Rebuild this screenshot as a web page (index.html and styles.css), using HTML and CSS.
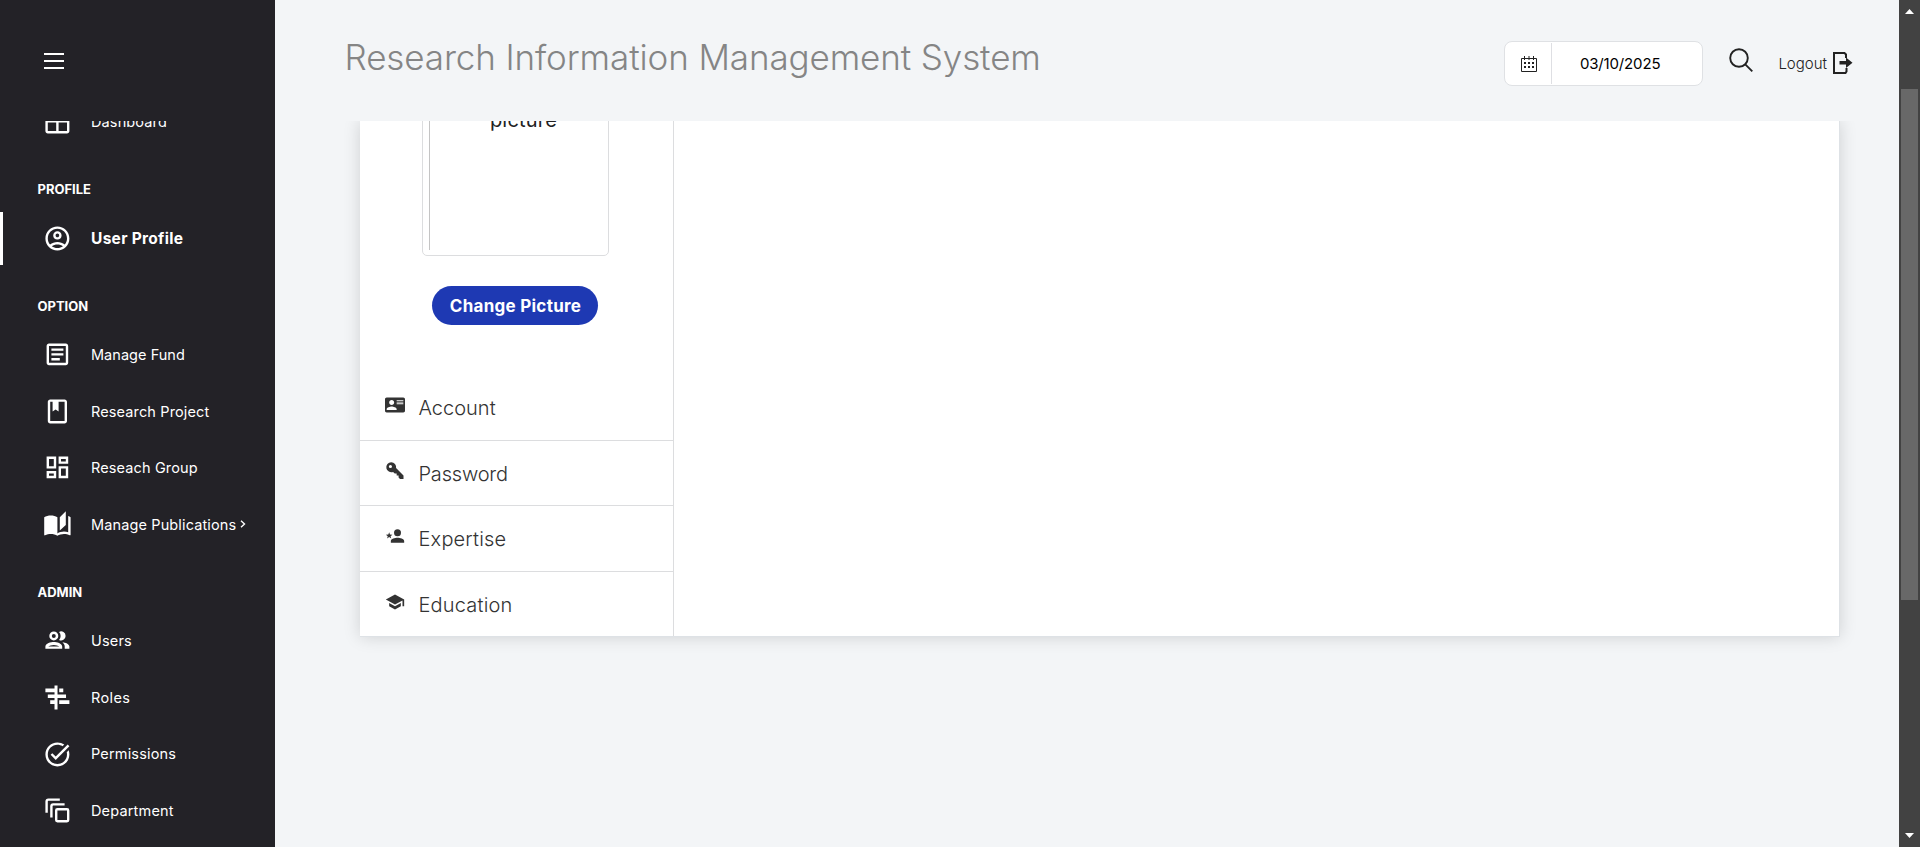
FILE: index.html
```html
<!DOCTYPE html>
<html lang="en">
<head>
<meta charset="utf-8">
<title>Research Information Management System</title>
<link rel="stylesheet" href="styles.css">
</head>
<body>
<div class="app">
  <aside class="sidebar">
    <div class="sidebar-top">
      <svg class="burger" viewBox="0 0 20 17"><path d="M0 2h20M0 9h20M0 16h20"/></svg>
    </div>
    <div class="menu-window">
      <nav class="menu">
        <a class="item"><svg viewBox="0 0 24 24"><path d="M20 2H4c-1.1 0-2 .9-2 2v16c0 1.1.9 2 2 2h16c1.1 0 2-.9 2-2V4c0-1.1-.9-2-2-2zM4 4h7v7H4zm0 16v-7h7v7zm16 0h-7v-7h7zm0-9h-7V4h7z"/></svg><span class="ls-b">Dashboard</span></a>
        <h3 class="group">PROFILE</h3>
        <a class="item active"><svg viewBox="0 0 24 24"><path d="M12 2C6.48 2 2 6.48 2 12s4.48 10 10 10 10-4.48 10-10S17.52 2 12 2zM7.35 18.5C8.66 17.56 10.26 17 12 17s3.34.56 4.65 1.5C15.34 19.44 13.74 20 12 20s-3.34-.56-4.65-1.5zm10.79-1.38C16.45 15.8 14.32 15 12 15s-4.45.8-6.14 2.12C4.7 15.73 4 13.95 4 12c0-4.42 3.58-8 8-8s8 3.58 8 8c0 1.95-.7 3.73-1.86 5.12zM12 6c-1.93 0-3.5 1.57-3.5 3.5S10.07 13 12 13s3.5-1.57 3.5-3.5S13.93 6 12 6zm0 5c-.83 0-1.5-.67-1.5-1.5S11.17 8 12 8s1.500.67 1.500 1.500S12.830 11 12 11z"/></svg><span>User Profile</span></a>
        <h3 class="group">OPTION</h3>
        <a class="item"><svg viewBox="0 0 24 24"><path d="M19 5v14H5V5h14m0-2H5c-1.100 0-2 .9-2 2v14c0 1.100.9 2 2 2h14c1.100 0 2-.9 2-2V5c0-1.100-.9-2-2-2zM14 17H7v-2h7v2zm3-4H7v-2h10v2zm0-4H7V7h10v2z"/></svg><span class="ls-a">Manage Fund</span></a>
        <a class="item"><svg viewBox="0 0 24 24"><path d="M18 2H6c-1.100 0-2 .9-2 2v16c0 1.100.9 2 2 2h12c1.100 0 2-.9 2-2V4c0-1.100-.9-2-2-2zM6 4h2v8l2.500-1.500L13 12V4h5v16H6V4z"/></svg><span class="ls-b">Research Project</span></a>
        <a class="item"><svg viewBox="0 0 24 24"><path d="M19 5v2h-4V5h4M9 5v6H5V5h4m10 8v6h-4v-6h4M9 17v2H5v-2h4M21 3h-8v6h8V3zM11 3H3v10h8V3zm10 8h-8v10h8V11zm-10 4H3v6h8v-6z"/></svg><span class="ls-b">Reseach Group</span></a>
        <a class="item"><svg viewBox="0 0 24 24"><path d="M19 1l-5 5v11l5-4.500V1zM1 6v14.650c0 .25.25.5.5.5.1 0 .15-.05.25-.05C3.100 20.450 5.050 20 6.500 20c1.950 0 4.050.4 5.500 1.500V6c-1.450-1.100-3.550-1.500-5.500-1.500S2.450 4.900 1 6zm22 13.500V6c-.6-.45-1.250-.75-2-1v13.500c-1.100-.35-2.300-.5-3.500-.5-1.700 0-4.150.65-5.500 1.500v2c1.350-.85 3.800-1.500 5.500-1.500 1.650 0 3.350.3 4.750 1.050.1.05.15.05.25.05.25 0 .5-.25.5-.5v-1.100z"/></svg><span class="ls-b">Manage Publications</span><svg class="chevron" viewBox="0 0 6 8"><path d="M1 .8 4.500 4 1 7.200"/></svg></a>
        <h3 class="group">ADMIN</h3>
        <a class="item"><svg viewBox="0 0 24 24"><path fill-rule="evenodd" d="M9 4.500a3.750 3.750 0 1 0 0 7.500 3.750 3.750 0 0 0 0-7.500zm0 2.100a1.650 1.650 0 1 1 0 3.300 1.650 1.650 0 0 1 0-3.300zM9 13.400c-2.400 0-7 1.200-7 3.700v1.900h14v-1.900c0-2.500-4.600-3.700-7-3.700zM4.400 17.100c.8-.7 2.900-1.300 4.600-1.300s3.800.6 4.600 1.300z"/><path d="M13.400 4.900a5 5 0 0 1 0 6.700 3.750 3.750 0 1 0 0-6.700zM16.200 13.500c1.100.9 1.900 2.100 1.900 3.600V19H22v-1.900c0-2.100-3.300-3.300-5.800-3.600z"/></svg><span class="ls-c">Users</span></a>
        <a class="item"><svg viewBox="0 0 24 24"><path d="M9.600 2h2.500v20H9.600zM2 4.600h7.600v3.100H2zM4 9.500h5.600v3.100H4zM6 14.400h3.600v3.100H6zM13.500 4.600h3.400v3.100h-3.400zM12 9.500h7.200v3.100H12zM13.500 14.400H22v3.100h-8.500z"/></svg><span class="ls-d">Roles</span></a>
        <a class="item"><svg viewBox="0 0 24 24"><path d="M22 5.180 10.590 16.600l-4.240-4.240 1.410-1.410 2.830 2.830 10-10L22 5.180zM19.790 10.220c.13.57.21 1.170.21 1.780 0 4.420-3.580 8-8 8s-8-3.580-8-8 3.580-8 8-8c1.580 0 3.040.46 4.280 1.250l1.440-1.440A9.900 9.900 0 0 0 12 2C6.480 2 2 6.480 2 12s4.480 10 10 10 10-4.480 10-10c0-1.190-.22-2.330-.6-3.390l-1.610 1.610z"/></svg><span class="ls-c">Permissions</span></a>
        <a class="item"><svg viewBox="0 0 24 24"><path fill="none" stroke="#fff" stroke-width="2" d="M3 14V4.500Q3 3 4.500 3H14M7 18V8.500Q7 7 8.500 7H18"/><path fill="none" stroke="#fff" stroke-width="2" d="M12 11h8q1 0 1 1v8q0 1-1 1h-8q-1 0-1-1v-8q0-1 1-1z"/></svg><span class="ls-c">Department</span></a>
      </nav>
    </div>
  </aside>
  <div class="main">
    <header class="header">
      <h1>Research Information Management System</h1>
      <div class="tools">
        <div class="date">
          <span class="date-icon"><svg viewBox="0 0 16 16"><path fill="none" stroke="#222" d="M.5 2.500h15v13H.5zM3.500 0v4M8 0v4M12.500 0v4"/><path d="M3 6h2v2H3zM7 6h2v2H7zM11 6h2v2h-2zM3 10h2v2H3zM7 10h2v2H7zM11 10h2v2h-2z"/></svg></span>
          <span class="date-text">03/10/2025</span>
        </div>
        <svg class="search" viewBox="0 0 24 24"><circle cx="10" cy="10" r="8.800"/><path d="m16.300 16.300 7 7"/></svg>
        <a class="logout"><span>Logout</span><svg viewBox="0 0 20 22"><path fill="none" stroke="#222" stroke-width="2" d="M13 6V2.500L11.500 1H1v20h11.500l1-1.500V16"/><path d="M6.500 9H13V5.500l6.500 5.200L13 16v-3.500H6.500z"/></svg></a>
      </div>
    </header>
    <main class="content">
      <section class="card">
        <div class="card-side">
          <div class="frame"><div class="photo">profile picture</div></div>
          <button class="change">Change Picture</button>
          <ul class="tabs">
            <li><svg viewBox="0 0 24 24"><path fill-rule="evenodd" d="M22 3H2C.9 3 0 3.900 0 5v14c0 1.100.9 2 2 2h20c1.100 0 2-.9 2-2V5c0-1.100-.9-2-2-2zM8 6c1.660 0 3 1.340 3 3s-1.340 3-3 3-3-1.340-3-3 1.340-3 3-3zm6 12H2v-1c0-2 4-3.100 6-3.100s6 1.100 6 3.100v1zm8-10v1h-8V8zm0-2v1h-8V6zm0 4v1h-8v-1z"/></svg><span class="ls-e">Account</span></li>
            <li><svg viewBox="0 0 24 24"><path fill-rule="evenodd" d="M7.500 1.500a6 6 0 1 0 2.200 11.600l2 2h2.300v2.300h2.300v2.300l1.700 1.800h4.200v-4.200l-8.900-8.800A6 6 0 0 0 7.500 1.500zM6.500 4.700a1.900 1.900 0 1 1 0 3.800 1.900 1.900 0 0 1 0-3.800z"/></svg><span class="ls-f">Password</span></li>
            <li><svg viewBox="0 0 24 24"><circle cx="15" cy="8" r="4.200"/><path d="M15 14c-2.900 0-8 1.300-8 4v2h16v-2c0-2.700-5.100-4-8-4zM5 13.300 7.500 15l-.8-2.800 2.200-1.800-2.900-.1L5 7.500l-1 2.800-2.900.1 2.200 1.800-.8 2.800z"/></svg><span class="ls-g">Expertise</span></li>
            <li><svg viewBox="0 0 24 24"><path d="M5 13.180v4L12 21l7-3.820v-4L12 17l-7-3.820zM12 3 1 9l11 6 9-4.910V17h2V9L12 3z"/></svg><span class="ls-g">Education</span></li>
          </ul>
        </div>
      </section>
    </main>
  </div>
  <div class="scrollbar">
    <svg viewBox="0 0 9 5"><path d="M0 5 4.500 0 9 5z"/></svg>
    <div class="thumb"></div>
    <svg viewBox="0 0 9 5"><path d="M0 0h9L4.500 5z"/></svg>
  </div>
</div>
</body>
</html>
```
FILE: styles.css
```css
* { box-sizing: border-box; }
body { margin: 0; font-family: Inter, "Open Sans", sans-serif; background: #f3f5f7; color: #222; }
h1, h3, ul { margin: 0; padding: 0; }
.app { display: flex; height: 847px; overflow: hidden; }

.sidebar { width: 275px; flex: none; background: #232227; color: #fff; display: flex; flex-direction: column; }
.sidebar-top { height: 121px; flex: none; padding: 52px 0 0 44px; }
.burger { display: block; width: 20px; height: 17px; stroke: #fff; stroke-width: 2; }
.menu-window { flex: 1; overflow: hidden; }
.menu { margin-top: -25.7px; }
.item { display: flex; align-items: center; height: 53px; margin-bottom: 3.6px; padding-left: 43.4px; font-size: 14.5px; white-space: nowrap; }
.item svg { width: 28.8px; height: 28.8px; margin-right: 18.8px; fill: #fff; flex: none; }
.item .chevron { width: 6px; height: 8px; margin: -1px 0 0 4px; fill: none; stroke: #fff; stroke-width: 1.4; }
.item.active { border-left: 3px solid #fff; padding-left: 40.4px; font-size: 15.5px; font-weight: 700; letter-spacing: .3px; }
.group { height: 59.8px; padding: 27.5px 0 0 37.5px; font-size: 13px; line-height: 20px; font-weight: 700; }

.ls-a { letter-spacing: .04px; }
.ls-b { letter-spacing: .13px; }
.ls-c { letter-spacing: .17px; }
.ls-d { letter-spacing: .4px; }
.ls-f { letter-spacing: -.2px; }
.ls-g { letter-spacing: .18px; }

.main { flex: 1; min-width: 0; display: flex; flex-direction: column; }
.header { height: 121px; flex: none; display: flex; justify-content: space-between; padding: 0 46px 0 69.5px; }
.header h1 { padding-top: 35px; font-size: 35px; line-height: 44px; font-weight: 300; letter-spacing: -.11px; color: #858585; white-space: nowrap; }
.tools { display: flex; align-items: flex-start; padding-top: 41px; }
.date { width: 199px; height: 45px; display: flex; align-items: center; padding: 1px 0; border: 1px solid #dfe1e4; border-radius: 8px; background: #fff; }
.date-icon { width: 47px; height: 41px; padding: 13px 0 0 16px; border-right: 1px solid #dedfe3; }
.date-icon svg { display: block; width: 16px; height: 16px; fill: #222; }
.date-text { padding-left: 27.5px; font-size: 15px; letter-spacing: -.15px; color: #000; }
.search { width: 24px; height: 24px; margin: 7px 0 0 26px; fill: none; stroke: #222; stroke-width: 1.9; }
.logout { display: flex; align-items: center; margin: 11px 0 0 25px; height: 22px; font-size: 15px; font-weight: 300; }
.logout svg { width: 20px; height: 22px; margin-left: 6px; fill: #222; }

.content { flex: 1; overflow: hidden; padding-left: 84.5px; }
.card { width: 1480px; height: 516px; display: flex; background: #fff; border-right: 1px solid #dee2e6; border-bottom: 1px solid #dee2e6; box-shadow: 0 0 16px rgba(0, 0, 0, .15); }
.card-side { width: 314px; border-right: 1px solid #dcdddf; display: flex; flex-direction: column; align-items: center; }
.frame { width: 187px; height: 195px; margin-top: -60px; margin-right: 1px; flex: none; padding: 6px; border: 1px solid #dcdddf; border-radius: 5px; }
.photo { width: 174px; height: 182px; padding: 7px 35px 0 49px; border-left: 1px solid #c4c4c4; font-size: 20px; line-height: 30px; letter-spacing: .2px; text-align: center; }
.change { width: 166px; height: 39px; margin: 30px 2px 0 0; flex: none; border: 0; border-radius: 20px; background: #1e39b3; color: #fff; font: 700 17px Inter, sans-serif; letter-spacing: .27px; padding: 0 0 0 1px; white-space: nowrap; }
.tabs { width: 100%; margin-top: 50px; list-style: none; }
.tabs li { height: 65.6px; display: flex; padding: 20px 0 0 25px; border-bottom: 1px solid #dcdddf; font-size: 20px; line-height: 26px; font-weight: 300; color: #333; }
.tabs li:last-child { border-bottom: 0; }
.tabs svg { width: 20px; height: 20px; margin: 0 14px 0 0; fill: #333; }

.scrollbar { width: 21px; flex: none; background: #424242; display: flex; flex-direction: column; align-items: center; padding: 9px 0; }
.scrollbar svg { width: 9px; height: 5px; fill: #fff; flex: none; }
.thumb { width: 17px; height: 511px; margin: 75px 0 233px; background: #686868; flex: none; }
```
